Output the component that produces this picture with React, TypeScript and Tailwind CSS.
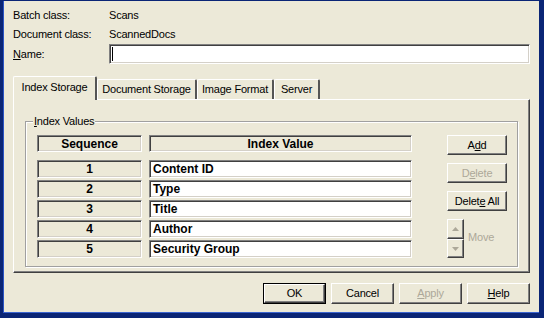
import React from 'react';
import clsx from 'clsx';

// Classic raised / sunken bevels used all over the dialog
const raised =
  'bg-[#ece9d8] border border-t-white border-l-white border-r-[#404040] border-b-[#404040] shadow-[inset_-1px_-1px_0_#808080]';
const sunken =
  'border border-t-[#808080] border-l-[#808080] border-b-white border-r-white shadow-[inset_1px_1px_0_#404040,inset_-1px_-1px_0_#d4d0c8]';

interface BtnProps {
  children: React.ReactNode;
  disabled?: boolean;
  className?: string;
}

const Btn: React.FC<BtnProps> = ({ children, disabled, className }) => (
  <div
    className={clsx(
      'flex items-center justify-center text-[11px] leading-none select-none',
      raised,
      disabled ? 'text-[#aca899]' : 'text-black',
      className
    )}
  >
    <span className="whitespace-pre">{children}</span>
  </div>
);

const tabs = [
  { label: 'Index Storage', w: 'w-[84px]', active: true },
  { label: 'Document Storage', w: 'w-[100px]', active: false },
  { label: 'Image Format', w: 'w-[77px]', active: false },
  { label: 'Server', w: 'w-[46px]', active: false },
];

const rows = ['Content ID', 'Type', 'Title', 'Author', 'Security Group'];

const Arrow = ({ up }: { up?: boolean }) => (
  <svg width="7" height="4" viewBox="0 0 7 4" className="block">
    <path d={up ? 'M3.5 0 L7 4 L0 4 Z' : 'M0 0 L7 0 L3.5 4 Z'} fill="#aca899" />
  </svg>
);

export default function App() {
  return (
    <div className="w-[544px] h-[318px] bg-[#0a2576] pl-[3px] pr-[5px] pb-[5px] pt-[1px] flex font-['Liberation_Sans',Arial,sans-serif] text-black">
      <div className="flex-1 flex flex-col bg-[#ece9d8] border-l border-[#2c55c4] border-r-[#c9d3ee] border-b border-b-[#3a64d0] pt-[5px] pl-[9px] pr-[9px] text-[11px] tracking-[-0.2px]">
        {/* header fields */}
        <div className="flex items-center h-[19px]">
          <span className="w-[96px]">Batch class:</span>
          <span>Scans</span>
        </div>
        <div className="flex items-center h-[19px]">
          <span className="w-[96px]">Document class:</span>
          <span>ScannedDocs</span>
        </div>
        <div className="flex items-center h-[20px]">
          <span className="w-[96px]">
            <span className="underline">N</span>ame:
          </span>
          <div className={clsx('flex-1 h-[20px] bg-white flex items-center pl-[2px]', sunken)}>
            <div className="w-px h-[14px] bg-black" />
          </div>
        </div>

        {/* tab strip */}
        <div className="mt-[12px] flex items-end h-[23px] relative z-10">
          {tabs.map((t) => (
            <div
              key={t.label}
              className={clsx(
                'flex items-center justify-center bg-[#ece9d8] border-t border-l border-t-white border-l-white border-r-2 border-r-[#555] rounded-t-[2px]',
                t.w,
                t.active ? 'h-[24px] -mb-px pb-[2px]' : 'h-[20px]'
              )}
            >
              {t.label}
            </div>
          ))}
        </div>

        {/* tab panel */}
        <div className="h-[174px] border border-t-white border-l-white border-r-[#404040] border-b-[#404040] shadow-[inset_-1px_-1px_0_#808080] pl-[11px] pt-[21px]">
          <div className="relative w-[493px] h-[146px] border border-[#a0a0a0] shadow-[inset_1px_1px_0_#fff,1px_1px_0_#fff] pt-[13px] pl-[11px] flex">
            <span className="absolute -top-[8px] left-[7px] px-[1px] bg-[#ece9d8] leading-[14px]">
              <span className="underline">I</span>ndex Values
            </span>

            {/* table */}
            <div className="flex flex-col font-bold text-[12px] tracking-normal">
              <div className="flex gap-[7px]">
                <div className={clsx('w-[105px] h-[17px] flex items-center justify-center', sunken)}>Sequence</div>
                <div className={clsx('w-[263px] h-[17px] flex items-center justify-center', sunken)}>Index Value</div>
              </div>
              <div className="mt-[8px] flex flex-col gap-[2px]">
                {rows.map((r, i) => (
                  <div key={r} className="flex gap-[7px]">
                    <div className={clsx('w-[105px] h-[18px] flex items-center justify-center', sunken)}>{i + 1}</div>
                    <div className={clsx('w-[263px] h-[18px] flex items-center pl-[3px] bg-white', sunken)}>{r}</div>
                  </div>
                ))}
              </div>
            </div>

            {/* side buttons */}
            <div className="ml-[35px] flex flex-col gap-[8px]">
              <Btn className="w-[60px] h-[20px]">
                A<span className="underline">d</span>d
              </Btn>
              <Btn disabled className="w-[60px] h-[20px]">
                D<span className="underline">e</span>lete
              </Btn>
              <Btn className="w-[60px] h-[20px]">
                Delet<span className="underline">e</span> All
              </Btn>
              <div className="flex items-center gap-[4px]">
                <div className="flex flex-col">
                  <Btn className="w-[17px] h-[20px]">
                    <Arrow up />
                  </Btn>
                  <Btn className="w-[17px] h-[19px]">
                    <Arrow />
                  </Btn>
                </div>
                <span className="text-[#aca899] -mt-[3px]">Move</span>
              </div>
            </div>
          </div>
        </div>

        {/* dialog buttons */}
        <div className="mt-[10px] flex justify-end gap-[5px]">
          <div className="border border-black">
            <Btn className="w-[61px] h-[19px]">OK</Btn>
          </div>
          <Btn className="w-[63px] h-[21px]">Cancel</Btn>
          <Btn disabled className="w-[63px] h-[21px]">
            <span className="underline">A</span>pply
          </Btn>
          <Btn className="w-[63px] h-[21px]">
            <span className="underline">H</span>elp
          </Btn>
        </div>
      </div>
    </div>
  );
}
